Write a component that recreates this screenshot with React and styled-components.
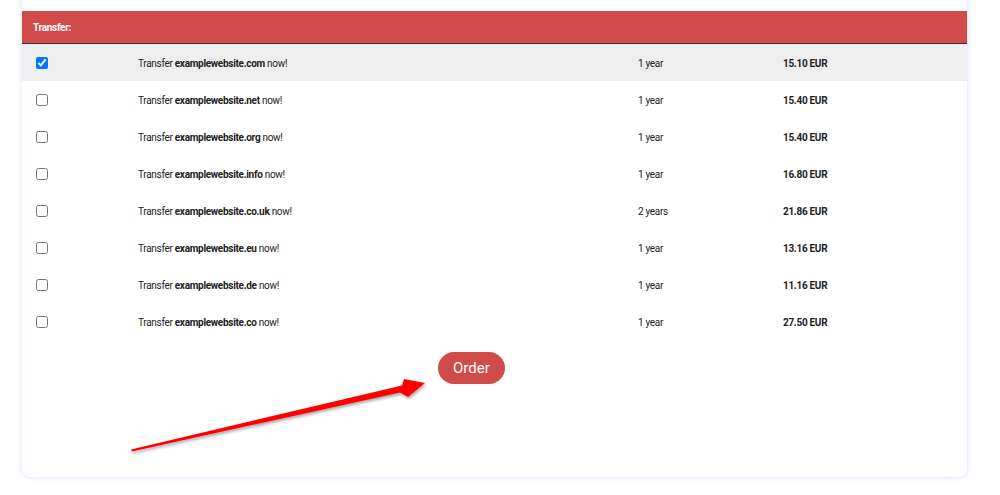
import React from "react";
import styled, { createGlobalStyle } from "styled-components";

const Global = createGlobalStyle`
  html, body { margin: 0; padding: 0; background: #ffffff; }
  body { font-family: Roboto, "Liberation Sans", Arial, sans-serif; color: #222; }
`;

const Page = styled.div`
  position: relative;
  width: 1000px;
  height: 495px;
  overflow: hidden;
  padding: 0 33px 0 22px;
  box-sizing: border-box;
`;

const Card = styled.div`
  margin-top: -20px;
  padding: 31px 0 93px;
  background: #fff;
  border-radius: 8px;
  box-shadow: 0 0 4px 1px rgba(200, 210, 245, 0.55);
  display: flex;
  flex-direction: column;
`;

const Header = styled.div`
  height: 32px;
  background: #d14b4b;
  border-bottom: 1px solid #4a2a2a;
  display: flex;
  align-items: center;
  padding-left: 11px;
  color: #fff;
  font-weight: 700;
  font-size: 10px;
  letter-spacing: -0.3px;
`;

const Row = styled.div`
  display: grid;
  grid-template-columns: 116px 500px 145px 1fr;
  align-items: center;
  height: 37px;
  padding-top: 1px;
  box-sizing: border-box;
  font-size: 10px;
  letter-spacing: -0.3px;
  background: ${(p) => (p.$active ? "#eeeeee" : "#ffffff")};
  &:first-of-type { height: 38px; }
`;

const CheckCell = styled.div`
  padding-left: 14px;
  display: flex;
  align-items: center;
  input { margin: 0; width: 12px; height: 12px; }
`;

const Price = styled.div`
  font-weight: 700;
`;

const Footer = styled.div`
  display: flex;
  padding: 12px 0 0 416px;
`;

const OrderButton = styled.button`
  height: 32px;
  padding: 0 15px;
  border: none;
  border-radius: 16px;
  background: #d14b4b;
  color: #fff;
  font-family: Roboto, "Liberation Sans", Arial, sans-serif;
  font-size: 15px;
`;

const Arrow = styled.svg`
  position: absolute;
  left: 0;
  top: 0;
  pointer-events: none;
`;

const rows = [
  ["com", "1 year", "15.10 EUR", true],
  ["net", "1 year", "15.40 EUR"],
  ["org", "1 year", "15.40 EUR"],
  ["info", "1 year", "16.80 EUR"],
  ["co.uk", "2 years", "21.86 EUR"],
  ["eu", "1 year", "13.16 EUR"],
  ["de", "1 year", "11.16 EUR"],
  ["co", "1 year", "27.50 EUR"],
];

export default function App() {
  return (
    <>
      <Global />
      <Page>
        <Card>
          <Header>Transfer:</Header>
          {rows.map(([tld, period, price, active]) => (
            <Row key={tld} $active={active}>
              <CheckCell>
                <input type="checkbox" defaultChecked={!!active} />
              </CheckCell>
              <div>
                Transfer <b>examplewebsite.{tld}</b> now!
              </div>
              <div>{period}</div>
              <Price>{price}</Price>
            </Row>
          ))}
          <Footer>
            <OrderButton>Order</OrderButton>
          </Footer>
        </Card>
        <Arrow width="1000" height="495" viewBox="0 0 1000 495">
          <defs>
            <filter id="sh" x="-10%" y="-10%" width="120%" height="130%">
              <feDropShadow dx="1" dy="2" stdDeviation="1.5" floodColor="#000" floodOpacity="0.35" />
            </filter>
          </defs>
          <polygon
            points="131,449.5 402,385.5 404,379 425,383 408,397 400,392.5 132,451.5"
            fill="#ff0000"
            filter="url(#sh)"
          />
        </Arrow>
      </Page>
    </>
  );
}
